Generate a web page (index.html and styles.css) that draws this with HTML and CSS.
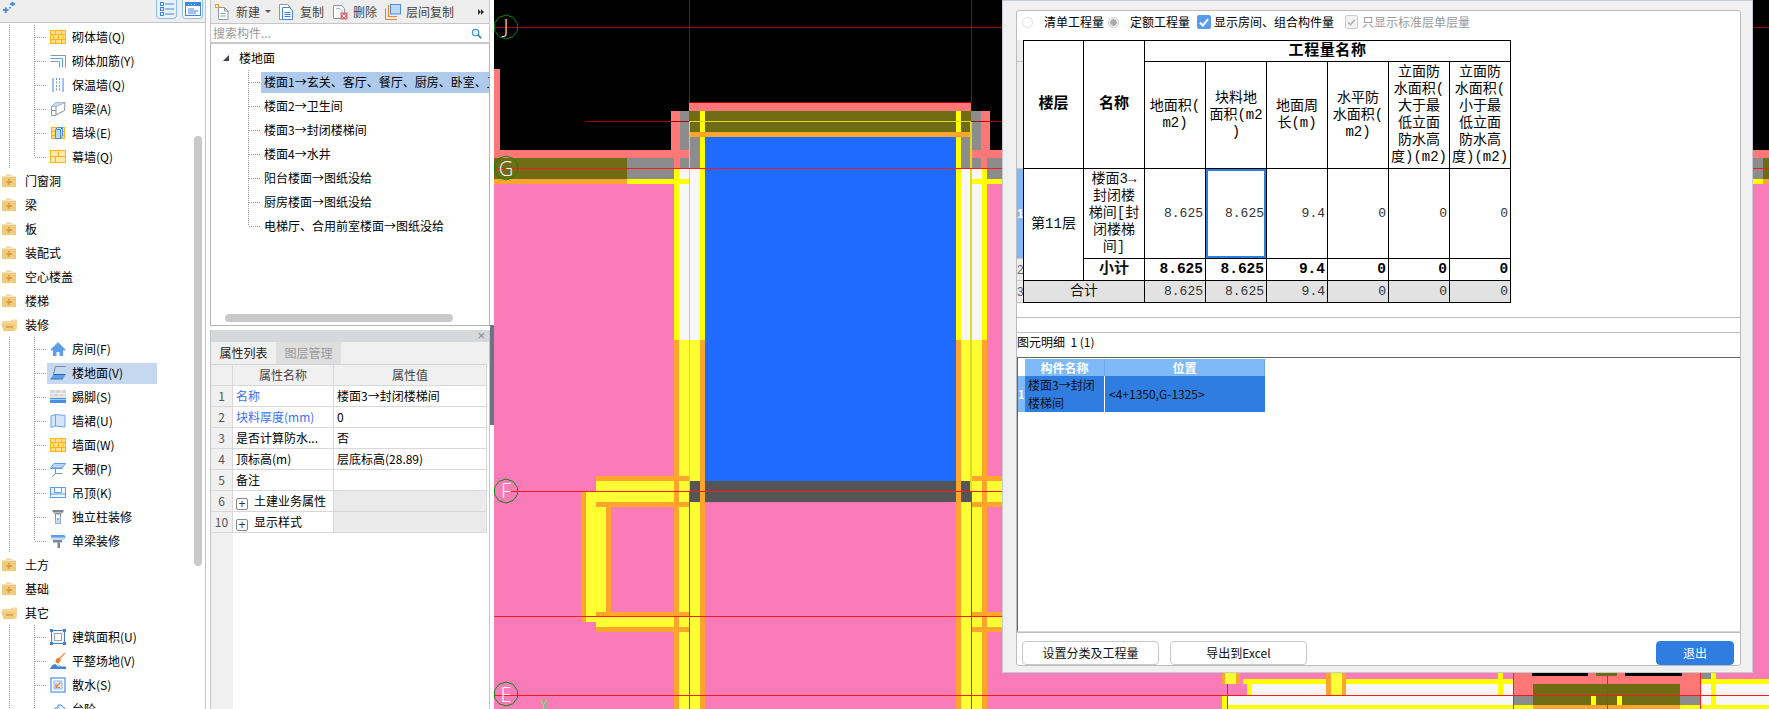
FILE: index.html
```html
<!DOCTYPE html>
<html lang="zh">
<head>
<meta charset="utf-8">
<title>工程量</title>
<link rel="stylesheet" href="styles.css">
</head>
<body>
<svg class="defs" xmlns="http://www.w3.org/2000/svg">
  <symbol id="i-brick" viewBox="0 0 16 16"><rect x=".5" y="1.5" width="15" height="13" fill="#ffe08a" stroke="#fdb515"/><path d="M1 5.5h14M1 10.500h14M5.500 2v3.500M11.500 2v3.500M3.500 5.500v5M8.500 5.500v5M13 5.500v5M5.500 10.500v4M11.500 10.500v4" stroke="#fdb515" fill="none"/></symbol>
  <symbol id="i-rebar" viewBox="0 0 16 16"><path d="M.5 2.500h15v12" fill="none" stroke="#8a97a8"/><path d="M.5 5.500h12v9" fill="none" stroke="#5b9be0"/><path d="M.5 8.500h9v6" fill="none" stroke="#8a97a8"/></symbol>
  <symbol id="i-insul" viewBox="0 0 16 16"><path d="M3 1v14M13 1v14" stroke="#3f86dc" fill="none"/><path d="M6.500 1v14M9.500 1v14" stroke="#7d8ea3" stroke-dasharray="2 1.500" fill="none"/><path d="M3 5h10M3 10h10" stroke="#9cc3ee" stroke-dasharray="1 2" fill="none"/></symbol>
  <symbol id="i-beam" viewBox="0 0 16 16"><path d="M1.500 5.500 6 1.500h9l-.5 8-9.500 5h-3.500z" fill="#fff" stroke="#8492a6"/><path d="M1.500 5.500H6l9-4M6 5.500v9" fill="none" stroke="#8492a6"/><path d="M6 1.500l9 0-9 4H1.500z" fill="#c6dcf5"/><path d="M1.500 9.500H6" stroke="#8492a6"/></symbol>
  <symbol id="i-pier" viewBox="0 0 16 16"><rect x="1.500" y="2.500" width="13" height="11" fill="#ffe08a" stroke="#fdb515"/><path d="M2 6.500h12M2 10.500h12" stroke="#fdb515"/><path d="M5.500 4.500l2-2h5v9l-2 2h-5z" fill="#bcd8f6" stroke="#4a90e2"/><path d="M5.500 4.500h5v9M10.500 4.500l2-2" fill="none" stroke="#4a90e2"/></symbol>
  <symbol id="i-curtain" viewBox="0 0 16 16"><rect x=".5" y="1.500" width="15" height="12" fill="#ffe9ac" stroke="#fdb515"/><path d="M1 7.500h14M8.500 2v5.500M5.500 7.500v6" stroke="#fdb515" fill="none"/></symbol>
  <symbol id="i-house" viewBox="0 0 16 16"><path d="M8 1 .5 8.500 2 10l1-1v6h3.500v-4h3v4H13V9l1 1 1.500-1.500z" fill="#5c9fe8"/><path d="M4 5 8 1.500" stroke="#b8d4f3" fill="none"/></symbol>
  <symbol id="i-floor" viewBox="0 0 16 16"><path d="M5.500 1.500h10M5.500 1.500 3.500 9" stroke="#7b8696" fill="none"/><path d="M3.500 9.500H15.500L13 14H.5z" fill="#5c9fe8"/><path d="M3.500 9.500H15.500" stroke="#33659d"/><path d="M.5 14H13" stroke="#3b75b4"/></symbol>
  <symbol id="i-skirt" viewBox="0 0 16 16"><rect y="1" width="16" height="8" fill="#d4d6d9"/><path d="M0 4.500h16M0 8h16M5 1v3.500M11 1v3.500M3 4.500V8M9 4.500V8M14 4.500V8" stroke="#f2f2f2"/><rect y="9" width="16" height="5" fill="#4a8fe0"/><path d="M0 10.500h16" stroke="#a9cdf2"/></symbol>
  <symbol id="i-dado" viewBox="0 0 16 16"><path d="M1 3 5.500 1.500 15 2.500V14L5.500 13 1 14.500z" fill="#d3e5fa" stroke="#6ea6e6"/><path d="M5.500 1.500V13" stroke="#6ea6e6"/></symbol>
  <symbol id="i-ceil" viewBox="0 0 16 16"><path d="M4 2.500h11.500L12 7H.5z" fill="#bcd8f6" stroke="#5c9fe8"/><path d="M.5 7h12v1H.5z" fill="#5c9fe8"/><path d="M5.500 8v4.500h7M5.500 12.500 2 15.500" stroke="#8492a6" fill="none"/></symbol>
  <symbol id="i-drop" viewBox="0 0 16 16"><rect x=".5" y="2.500" width="15" height="10" fill="#f0f6fd" stroke="#5c9fe8"/><path d="M4.500 3v4.500h7V3" fill="#fff" stroke="#5c9fe8"/><path d="M1 9h14" stroke="#5c9fe8"/></symbol>
  <symbol id="i-col" viewBox="0 0 16 16"><path d="M2.500 1h11v2.500h-11z" fill="#7d8792"/><path d="M4 3.500h8V5H4z" fill="#a6adb5"/><rect x="5.500" y="5" width="5" height="9.500" fill="#fff" stroke="#7d8ea3"/><path d="M5.500 10.500 10.500 7.500v7h-5z" fill="#c6dcf5"/><path d="M8 9v2" stroke="#4a90e2"/></symbol>
  <symbol id="i-paint" viewBox="0 0 16 16"><path d="M1 1.500h13L15.500 4l-1.500 2H1z" fill="#5c9fe8"/><path d="M1 1.500h13" stroke="#fff"/><path d="M1 4.500h13V7H1z" fill="#c6dcf5"/><path d="M3 7h9v2.500H3z" fill="#7d8792"/><path d="M7.500 9.500h2.500v5.500H7.500z" fill="#7d8792"/></symbol>
  <symbol id="i-area" viewBox="0 0 16 16"><rect x="1.500" y="1.500" width="13" height="13" fill="#eef3fa" stroke="#4a7fc0"/><rect x="4.500" y="4.500" width="7" height="7" fill="#fff" stroke="#9aa4b0"/><path d="M0 0h3v3H0zM13 0h3v3h-3zM0 13h3v3H0zM13 13h3v3h-3z" fill="#4a7fc0"/></symbol>
  <symbol id="i-shovel" viewBox="0 0 16 16"><path d="M15 0 9 6" stroke="#f08a3c" stroke-width="1.200" fill="none"/><path d="M9 4.500 11 7 8.500 10.500 5.500 9.500 6 6z" fill="#f0812c"/><path d="M6.500 11 10 13.500H12.500z" fill="#9aa0a8"/><path d="M0 15.500 2.500 12 5.500 11 8 13.500 16 13.500V16H0z" fill="#3f82d6"/></symbol>
  <symbol id="i-apron" viewBox="0 0 16 16"><rect x="1" y="1" width="14" height="14" fill="#fff" stroke="#4a8fe0" stroke-width="1.200"/><rect x="4" y="4" width="8" height="8" fill="#dce9f8" stroke="#8ab6e8"/><path d="M10.500 5.500 6.500 9.500M6 6.500v4h4" stroke="#f0812c" fill="none" stroke-width="1.200"/></symbol>
  <symbol id="i-step" viewBox="0 0 16 16"><path d="M1 14v-4h4V7h3V4h3L15 7.500v7" fill="#e8f1fb" stroke="#4a8fe0"/></symbol>
  <symbol id="i-fplus" viewBox="0 0 16 16"><path d="M5 1.500h5l1 1.500H5z" fill="#eed39c"/><rect x="1" y="3.500" width="14" height="10.500" fill="#f0cb80"/><path d="M8 6v6M5 9h6" stroke="#d39b2f" stroke-width="1.400"/></symbol>
  <symbol id="i-fminus" viewBox="0 0 16 16"><path d="M1 4h8l2-1.500h5V12l-2 2H3z" fill="#f4d796"/><path d="M0 6.500h13l1.500 0-1 7.500H2.500z" fill="#f0cb80"/><path d="M5 10h7" stroke="#d39b2f" stroke-width="1.400"/></symbol>
  <symbol id="i-new" viewBox="0 0 16 16"><path d="M3.500 3.500h6l3.500 3.500v8.500H3.500z" fill="#fff" stroke="#8a98a8"/><path d="M9.500 3.500V7H13" fill="none" stroke="#8a98a8"/><path d="M5.500 9.500h5M5.500 12h5" stroke="#8a98a8"/><path d="M0 0h4v4H0z" fill="#f59a2e"/><path d="M1 1h2v2H1z" fill="#fff"/></symbol>
  <symbol id="i-copy" viewBox="0 0 16 16"><path d="M1 .5h8l3 3v12H1z" fill="#fff" stroke="#8a98a8" transform="translate(-.5 0)"/><path d="M3.500 3.500h7l3 3v9h-10z" fill="#fff" stroke="#3f86dc"/><path d="M5.500 8.500h6M5.500 10.500h6M5.500 12.500h6" stroke="#3f86dc"/></symbol>
  <symbol id="i-del" viewBox="0 0 16 16"><path d="M1.500 1.500h8l3 3v10h-11z" fill="#fff" stroke="#8a98a8"/><path d="M4 4.500h4l2 2v3" fill="none" stroke="#b8c0ca"/><rect x="8.500" y="8.500" width="7" height="7" fill="#e06a6a"/><path d="M10 10l4 4M14 10l-4 4" stroke="#fff"/></symbol>
  <symbol id="i-floors" viewBox="0 0 16 16"><path d="M3.500 1v11.500H12M.5 4.500v11H12" fill="none" stroke="#f0812c" stroke-width="1.100"/><rect x="5.500" y=".5" width="10" height="9.500" fill="#bcd8f6" stroke="#4a90e2"/></symbol>
  <symbol id="i-list" viewBox="0 0 16 16"><rect x="1.500" y="1.500" width="3" height="3" fill="none" stroke="#3f86dc"/><rect x="1.500" y="6.500" width="3" height="3" fill="none" stroke="#3f86dc"/><rect x="1.500" y="11.500" width="3" height="3" fill="none" stroke="#3f86dc"/><path d="M6 3h9M6 8h9M6 13h9" stroke="#3f86dc"/></symbol>
  <symbol id="i-panel" viewBox="0 0 16 16"><rect x=".5" y="1.500" width="15" height="13" fill="#fff" stroke="#3f86dc"/><path d="M1 2h14v3H1z" fill="#3f86dc"/><path d="M3 3.500h1M6 3.500h1M9 3.500h1" stroke="#fff"/><path d="M3 8h6M3 10h10M3 12h8" stroke="#3f86dc"/></symbol>
  <symbol id="i-wand" viewBox="0 0 12 12"><path d="M7 2h5M9.500 0v4" stroke="#4a8fd8" stroke-width="2"/><path d="M0 8h5.500M2.750 5.500v5.500" stroke="#4a8fd8" stroke-width="2"/><path d="M6 5h2v1.500H6z" fill="#4a8fd8"/></symbol>
  <symbol id="i-search" viewBox="0 0 12 12"><circle cx="5" cy="5" r="3.500" fill="#e9f3fb" stroke="#4a9ad4" stroke-width="1.400"/><path d="M7.500 7.500 11 11" stroke="#3b7fae" stroke-width="1.800"/></symbol>
</svg>

<div class="app">
  <aside class="left">
    <div class="ltools">
      <svg class="wand"><use href="#i-wand"/></svg>
      <span class="grow"></span>
      <button class="tbtn on"><svg class="ic"><use href="#i-list"/></svg></button>
      <button class="tbtn"><svg class="ic"><use href="#i-panel"/></svg></button>
    </div>
    <div class="ltree">
      <div class="outer">
        <div class="kid"><i class="stub"></i><span class="lab"><svg class="ic"><use href="#i-brick"/></svg>砌体墙(Q)</span></div>
        <div class="kid"><i class="stub"></i><span class="lab"><svg class="ic"><use href="#i-rebar"/></svg>砌体加筋(Y)</span></div>
        <div class="kid"><i class="stub"></i><span class="lab"><svg class="ic"><use href="#i-insul"/></svg>保温墙(Q)</span></div>
        <div class="kid"><i class="stub"></i><span class="lab"><svg class="ic"><use href="#i-beam"/></svg>暗梁(A)</span></div>
        <div class="kid"><i class="stub"></i><span class="lab"><svg class="ic"><use href="#i-pier"/></svg>墙垛(E)</span></div>
        <div class="kid"><i class="stub"></i><span class="lab"><svg class="ic"><use href="#i-curtain"/></svg>幕墙(Q)</span></div>
      </div>
      <div class="fold"><svg class="ic"><use href="#i-fplus"/></svg>门窗洞</div>
      <div class="fold"><svg class="ic"><use href="#i-fplus"/></svg>梁</div>
      <div class="fold"><svg class="ic"><use href="#i-fplus"/></svg>板</div>
      <div class="fold"><svg class="ic"><use href="#i-fplus"/></svg>装配式</div>
      <div class="fold"><svg class="ic"><use href="#i-fplus"/></svg>空心楼盖</div>
      <div class="fold"><svg class="ic"><use href="#i-fplus"/></svg>楼梯</div>
      <div class="fold"><svg class="ic"><use href="#i-fminus"/></svg>装修</div>
      <div class="outer">
        <div class="kid"><i class="stub"></i><span class="lab"><svg class="ic"><use href="#i-house"/></svg>房间(F)</span></div>
        <div class="kid"><i class="stub"></i><span class="lab sel"><svg class="ic"><use href="#i-floor"/></svg>楼地面(V)</span></div>
        <div class="kid"><i class="stub"></i><span class="lab"><svg class="ic"><use href="#i-skirt"/></svg>踢脚(S)</span></div>
        <div class="kid"><i class="stub"></i><span class="lab"><svg class="ic"><use href="#i-dado"/></svg>墙裙(U)</span></div>
        <div class="kid"><i class="stub"></i><span class="lab"><svg class="ic"><use href="#i-brick"/></svg>墙面(W)</span></div>
        <div class="kid"><i class="stub"></i><span class="lab"><svg class="ic"><use href="#i-ceil"/></svg>天棚(P)</span></div>
        <div class="kid"><i class="stub"></i><span class="lab"><svg class="ic"><use href="#i-drop"/></svg>吊顶(K)</span></div>
        <div class="kid"><i class="stub"></i><span class="lab"><svg class="ic"><use href="#i-col"/></svg>独立柱装修</span></div>
        <div class="kid"><i class="stub"></i><span class="lab"><svg class="ic"><use href="#i-paint"/></svg>单梁装修</span></div>
      </div>
      <div class="fold"><svg class="ic"><use href="#i-fplus"/></svg>土方</div>
      <div class="fold"><svg class="ic"><use href="#i-fplus"/></svg>基础</div>
      <div class="fold"><svg class="ic"><use href="#i-fminus"/></svg>其它</div>
      <div class="outer">
        <div class="kid"><i class="stub"></i><span class="lab"><svg class="ic"><use href="#i-area"/></svg>建筑面积(U)</span></div>
        <div class="kid"><i class="stub"></i><span class="lab"><svg class="ic"><use href="#i-shovel"/></svg>平整场地(V)</span></div>
        <div class="kid"><i class="stub"></i><span class="lab"><svg class="ic"><use href="#i-apron"/></svg>散水(S)</span></div>
        <div class="kid"><i class="stub"></i><span class="lab"><svg class="ic"><use href="#i-step"/></svg>台阶</span></div>
      </div>
    </div>
    <div class="vthumb"></div>
  </aside>

  <section class="mid">
    <div class="mtools">
      <span class="tool"><svg class="ic"><use href="#i-new"/></svg>新建<i class="caret"></i></span>
      <span class="tool"><svg class="ic"><use href="#i-copy"/></svg>复制</span>
      <span class="tool"><svg class="ic"><use href="#i-del"/></svg>删除</span>
      <span class="tool"><svg class="ic"><use href="#i-floors"/></svg>层间复制</span>
      <span class="grow"></span>
      <span class="more"><i></i><i></i></span>
    </div>
    <div class="search"><span class="grow">搜索构件...</span><svg class="mag"><use href="#i-search"/></svg></div>
    <div class="mtree">
      <div class="root"><i class="tri"></i>楼地面</div>
      <div class="kids">
        <div class="kid"><i class="stub"></i><span class="lab on">楼面1→玄关、客厅、餐厅、厨房、卧室、卫</span></div>
        <div class="kid"><i class="stub"></i><span class="lab">楼面2→卫生间</span></div>
        <div class="kid"><i class="stub"></i><span class="lab">楼面3→封闭楼梯间</span></div>
        <div class="kid"><i class="stub"></i><span class="lab">楼面4→水井</span></div>
        <div class="kid"><i class="stub"></i><span class="lab">阳台楼面→图纸没给</span></div>
        <div class="kid"><i class="stub"></i><span class="lab">厨房楼面→图纸没给</span></div>
        <div class="kid"><i class="stub"></i><span class="lab">电梯厅、合用前室楼面→图纸没给</span></div>
      </div>
      <div class="hthumb"></div>
    </div>
    <div class="props">
      <div class="phead"><span class="close">×</span></div>
      <div class="ptabs"><span class="ptab active">属性列表</span><span class="ptab">图层管理</span></div>
      <div class="pbody">
        <table class="ptable">
          <colgroup><col class="c-n"><col class="c-k"><col class="c-v"></colgroup>
          <tr class="hd"><th></th><th>属性名称</th><th>属性值</th></tr>
          <tr><td class="n">1</td><td class="blue">名称</td><td>楼面3→封闭楼梯间</td></tr>
          <tr><td class="n">2</td><td class="blue">块料厚度(mm)</td><td>0</td></tr>
          <tr><td class="n">3</td><td>是否计算防水...</td><td>否</td></tr>
          <tr><td class="n">4</td><td>顶标高(m)</td><td>层底标高(28.89)</td></tr>
          <tr><td class="n">5</td><td>备注</td><td></td></tr>
          <tr class="grp"><td class="n">6</td><td><i class="plus">+</i>土建业务属性</td><td></td></tr>
          <tr class="grp"><td class="n">10</td><td><i class="plus">+</i>显示样式</td><td></td></tr>
        </table>
      </div>
    </div>
  </section>

  <div class="sash"><div class="grip"></div></div>

  <main class="canvas">
    <svg class="cad" viewBox="494 0 1275 709" xmlns="http://www.w3.org/2000/svg">
      <defs>
        <polygon id="hub" points="0,-12 7,-9.700 11.400,-3.700 11.400,3.700 7,9.700 0,12 -7,9.700 -11.400,3.700 -11.400,-3.700 -7,-9.700"/>
      </defs>
      <g class="rects">
        <rect class="pk" x="494" y="184" width="1275" height="525"/>
        <rect class="bk" x="494" y="0" width="1275" height="184"/>
        <!-- left wing -->
        <rect class="sa" x="494" y="69" width="6" height="81"/>
        <rect class="sa" x="494" y="150" width="177" height="8"/>
        <rect class="sa" x="671" y="111" width="9" height="57"/>
        <rect class="gy" x="680" y="111" width="9" height="39"/>
        <rect class="sa" x="680" y="150" width="9" height="8"/>
        <rect class="gy" x="627" y="158" width="47" height="21"/>
        <rect class="ol" x="494" y="158" width="133" height="21"/>
        <rect class="or" x="494" y="179" width="133" height="5"/>
        <rect class="gy" x="680" y="158" width="9" height="10"/>
        <rect class="wh" x="679" y="168" width="12" height="172"/>
        <rect class="ye" x="674" y="168" width="5" height="172"/>
        <rect class="ye" x="627" y="179" width="62" height="5"/>
        <!-- top strip -->
        <rect class="sa" x="689" y="103" width="282" height="8"/>
        <rect class="ol" x="689" y="111" width="282" height="21"/>
        <rect class="or" x="689" y="132" width="282" height="5"/>
        <rect class="ye" x="700" y="111" width="5" height="21"/>
        <rect class="ye" x="956" y="111" width="5" height="21"/>
        <rect class="gy" x="689" y="137" width="11" height="31"/>
        <rect class="gy" x="961" y="137" width="10" height="31"/>
        <rect class="wh" x="691" y="168" width="9" height="172"/>
        <rect class="wh" x="961" y="168" width="10" height="172"/>
        <rect class="ye" x="700" y="137" width="5" height="203"/>
        <rect class="ye" x="956" y="137" width="5" height="203"/>
        <rect class="bl" x="705" y="137" width="251" height="344"/>
        <!-- right wing -->
        <rect class="gy" x="971" y="111" width="10" height="39"/>
        <rect class="sa" x="981" y="111" width="9" height="57"/>
        <rect class="sa" x="971" y="150" width="31" height="8"/>
        <rect class="gy" x="971" y="158" width="10" height="10"/>
        <rect class="gy" x="987" y="158" width="15" height="21"/>
        <rect class="wh" x="971" y="168" width="11" height="172"/>
        <rect class="ye" x="982" y="168" width="5" height="172"/>
        <rect class="ye" x="971" y="179" width="31" height="5"/>
        <!-- lower columns -->
        <rect class="or" x="674" y="340" width="5" height="369"/>
        <rect class="ly" x="679" y="340" width="21" height="369"/>
        <rect class="or" x="700" y="340" width="5" height="369"/>
        <rect class="or" x="956" y="340" width="5" height="369"/>
        <rect class="ly" x="961" y="340" width="21" height="369"/>
        <rect class="or" x="982" y="340" width="5" height="369"/>
        <!-- left frame -->
        <rect class="ly" x="586" y="491" width="20" height="131"/>
        <rect class="or" x="581" y="491" width="5" height="131"/>
        <rect class="or" x="606" y="491" width="5" height="131"/>
        <!-- cross bars -->
        <rect class="or" x="596" y="476" width="93" height="5"/>
        <rect class="ly" x="596" y="481" width="93" height="21"/>
        <rect class="or" x="596" y="502" width="93" height="5"/>
        <rect class="or" x="596" y="612" width="93" height="5"/>
        <rect class="ly" x="596" y="617" width="93" height="10"/>
        <rect class="or" x="596" y="627" width="93" height="5"/>
        <rect class="or" x="674" y="476" width="5" height="31"/>
        <rect class="or" x="674" y="612" width="5" height="20"/>
        <rect class="or" x="971" y="476" width="31" height="5"/>
        <rect class="ly" x="971" y="481" width="31" height="21"/>
        <rect class="or" x="971" y="502" width="31" height="5"/>
        <rect class="or" x="971" y="612" width="31" height="5"/>
        <rect class="ly" x="971" y="617" width="31" height="10"/>
        <rect class="or" x="971" y="627" width="31" height="5"/>
        <rect class="or" x="982" y="476" width="5" height="31"/>
        <rect class="or" x="982" y="612" width="5" height="20"/>
        <!-- dark band -->
        <rect class="dk" x="689" y="481" width="11" height="21"/>
        <rect class="dk" x="705" y="481" width="251" height="21"/>
        <rect class="dk" x="961" y="481" width="10" height="21"/>
        <!-- right of the window -->
        <rect class="sa" x="1753" y="150" width="16" height="8"/>
        <rect class="gy" x="1753" y="158" width="10" height="21"/>
        <rect class="ol" x="1763" y="158" width="6" height="21"/>
        <rect class="ye" x="1753" y="179" width="10" height="5"/>
        <rect class="or" x="1763" y="179" width="6" height="5"/>
        <!-- below the window -->
        <rect class="or" x="1222" y="673" width="3" height="11"/>
        <rect class="ly" x="1225" y="673" width="11" height="11"/>
        <rect class="or" x="1236" y="673" width="4" height="11"/>
        <rect class="ye" x="1243" y="679" width="270" height="5"/>
        <rect class="wh" x="1252" y="684" width="246" height="11"/>
        <rect class="ye" x="1247" y="684" width="5" height="11"/>
        <rect class="ye" x="1498" y="673" width="5" height="22"/>
        <rect class="wh" x="1503" y="684" width="10" height="11"/>
        <rect class="ye" x="1222" y="695" width="5" height="14"/>
        <rect class="wh" x="1227" y="695" width="286" height="10"/>
        <rect class="ye" x="1227" y="705" width="286" height="4"/>
        <rect class="or" x="1326" y="673" width="5" height="22"/>
        <rect class="ly" x="1331" y="673" width="11" height="22"/>
        <rect class="or" x="1342" y="673" width="4" height="22"/>
        <rect class="sa" x="1513" y="673" width="187" height="22"/>
        <rect class="bk" x="1532" y="673" width="56" height="3"/>
        <rect class="ol" x="1596" y="673" width="21" height="3"/>
        <rect class="bk" x="1625" y="673" width="57" height="3"/>
        <rect class="ol" x="1533" y="684" width="147" height="21"/>
        <rect class="gy" x="1513" y="695" width="20" height="10"/>
        <rect class="gy" x="1680" y="695" width="20" height="10"/>
        <rect class="ye" x="1591" y="695" width="5" height="10"/>
        <rect class="ye" x="1617" y="695" width="5" height="10"/>
        <rect class="or" x="1533" y="705" width="147" height="4"/>
        <rect class="ye" x="1513" y="705" width="20" height="4"/>
        <rect class="ye" x="1680" y="705" width="20" height="4"/>
        <rect class="gy" x="1701" y="673" width="10" height="7"/>
        <rect class="ye" x="1711" y="673" width="5" height="22"/>
        <rect class="ye" x="1700" y="679" width="69" height="5"/>
        <rect class="wh" x="1700" y="684" width="11" height="11"/>
        <rect class="wh" x="1716" y="684" width="53" height="11"/>
        <rect class="wh" x="1700" y="695" width="69" height="10"/>
        <rect class="ye" x="1711" y="695" width="5" height="10"/>
        <rect class="ye" x="1700" y="705" width="69" height="4"/>
      </g>
      <rect class="wall" x="689.500" y="121.500" width="281.500" height="370"/>
      <g class="dred">
        <path d="M494 27.500H1769M689.500 0V103M971.500 0V103M689 102.500H971M586 121.500H689M971 121.500H1002"/>
      </g>
      <g class="bred">
        <path d="M494 168.500H1769M509 491.500H1002M494 616.500H1002M494 695H1769M689.500 491V709M971.500 491V709M1227.500 684V709M1513.500 673V709M1607.500 673V709M1700.500 673V709"/>
      </g>
      <g class="hubs">
        <use href="#hub" x="506" y="27"/>
        <use href="#hub" x="506" y="168"/>
        <use href="#hub" x="506" y="491"/>
        <use href="#hub" x="506" y="694"/>
      </g>
      <g class="axis">
        <text x="506" y="34">J</text>
        <text x="506" y="176">G</text>
        <text x="506" y="498">F</text>
        <text x="506" y="702">E</text>
      </g>
      <text class="ytag" x="544" y="709">Y</text>
    </svg>

    <div class="dialog">
      <div class="sheet">
        <div class="pane-a">
          <div class="opts">
            <span class="radio"></span><span class="opt w-a">清单工程量</span>
            <span class="radio dot"></span><span class="opt w-b">定额工程量</span>
            <span class="check"><svg viewBox="0 0 12 12"><path d="M2.500 6.500 5 9l4.500-5.500" fill="none" stroke="#fff" stroke-width="1.800"/></svg></span><span class="opt w-c">显示房间、组合构件量</span>
            <span class="check off"><svg viewBox="0 0 12 12"><path d="M2.500 6.500 5 9l4.500-5.500" fill="none" stroke="#aaa" stroke-width="1.600"/></svg></span><span class="opt dim">只显示标准层单层量</span>
          </div>
          <table class="qty">
            <colgroup><col class="g"><col class="q"><col class="q"><col class="q"><col class="q"><col class="q"><col class="q"><col class="q"><col class="q"></colgroup>
            <tr class="r-a"><td class="rn"></td><th class="first top b" rowspan="2">楼层</th><th class="top b" rowspan="2">名称</th><th class="top b big" colspan="6">工程量名称</th></tr>
            <tr class="r-b"><td class="rn"></td><th>地面积(<br>m2)</th><th>块料地<br>面积(m2<br>)</th><th>地面周<br>长(m)</th><th>水平防<br>水面积(<br>m2)</th><th>立面防<br>水面积(<br>大于最<br>低立面<br>防水高<br>度)(m2)</th><th>立面防<br>水面积(<br>小于最<br>低立面<br>防水高<br>度)(m2)</th></tr>
            <tr class="r-c"><td class="rn hot">1</td><td class="first tx" rowspan="2">第11层</td><td class="tx">楼面3→<br>封闭楼<br>梯间[封<br>闭楼梯<br>间]</td><td class="num">8.625</td><td class="num picked">8.625</td><td class="num">9.4</td><td class="num">0</td><td class="num">0</td><td class="num">0</td></tr>
            <tr class="r-d"><td class="rn">2</td><td class="tx b">小计</td><td class="num b">8.625</td><td class="num b">8.625</td><td class="num b">9.4</td><td class="num b">0</td><td class="num b">0</td><td class="num b">0</td></tr>
            <tr class="r-d tot"><td class="rn">3</td><td class="first tx" colspan="2">合计</td><td class="num">8.625</td><td class="num">8.625</td><td class="num">9.4</td><td class="num">0</td><td class="num">0</td><td class="num">0</td></tr>
          </table>
        </div>
        <div class="pane-b">
          <div class="pb-title">图元明细&nbsp;&nbsp;1 (1)</div>
          <div class="pb-grid">
            <table class="det">
              <colgroup><col class="d0"><col class="d1"><col class="d2"></colgroup>
              <tr class="dh"><th class="blank"></th><th>构件名称</th><th>位置</th></tr>
              <tr class="dr"><td class="dn">1</td><td>楼面3→封闭<br>楼梯间</td><td>&lt;4+1350,G-1325&gt;</td></tr>
            </table>
          </div>
        </div>
        <div class="foot">
          <button class="btn w1">设置分类及工程量</button>
          <button class="btn w1">导出到Excel</button>
          <span class="grow"></span>
          <button class="btn exit">退出</button>
        </div>
      </div>
    </div>
  </main>
</div>
</body>
</html>
```

FILE: styles.css
```css
* { box-sizing: border-box; }
html, body { margin: 0; height: 100%; }
body {
  background: #fff;
  color: #000;
  font: 12px/16px "Noto Sans CJK SC", "Liberation Sans", sans-serif;
  overflow: hidden;
}
.defs { display: none; }
.grow { flex: 1; }
.ic { width: 16px; height: 16px; flex: none; }
.app { display: flex; width: 1769px; height: 709px; overflow: hidden; }

/* left tree */
.left { position: relative; width: 206px; height: 709px; border-right: 1px solid #c4c4c4; flex: none; overflow: hidden; }
.ltools { display: flex; align-items: flex-start; height: 23px; padding-right: 2px; gap: 5px; background: #eee; border-bottom: 1px solid #c2c4c8; }
.wand { width: 12px; height: 12px; margin: 2px 0 0 3px; }
.tbtn { width: 21px; height: 19px; padding: 0; display: flex; align-items: center; justify-content: center; background: #f4f8fd; border: 1px solid #8fc0f2; border-top: 0; border-radius: 0 0 4px 4px; }
.tbtn.on { background: #e8f2fc; }
.ltree { padding-top: 2px; }
.fold { display: flex; align-items: center; height: 24px; padding-left: 1px; gap: 8px; }
.outer { margin-left: 9px; padding-left: 25px; background: repeating-linear-gradient(#999 0 1px, transparent 1px 2px) 0 0 / 1px 100% no-repeat; }
.kid { display: flex; align-items: center; height: 24px; background: repeating-linear-gradient(#999 0 1px, transparent 1px 2px) 0 0 / 1px 100% no-repeat; }
.kid:last-child { background-size: 1px 12px; }
.stub { flex: none; width: 12px; height: 1px; margin-left: 1px; background: repeating-linear-gradient(90deg, #999 0 1px, transparent 1px 2px); }
.lab { display: flex; align-items: center; gap: 6px; height: 21px; padding-left: 3px; white-space: nowrap; }
.outer .lab { width: 110px; }
.lab.sel { background: #c6d7f0; }
.vthumb { position: absolute; left: 194px; top: 136px; width: 8px; height: 430px; border-radius: 4px; background: #c9c9c9; }

/* middle column */
.mid { display: flex; flex-direction: column; flex: none; width: 280px; height: 709px; margin-left: 4px; }
.mtools { display: flex; align-items: center; height: 24px; padding-left: 4px; background: #eee; border: 1px solid #c6c6c6; border-width: 0 1px 1px; color: #444; }
.tool { display: flex; align-items: center; gap: 5px; margin-right: 8px; }
.caret { width: 0; height: 0; margin-left: 0; border: 3px solid transparent; border-top: 3px solid #555; border-bottom: 0; }
.more { display: flex; margin-right: 5px; }
.more i { width: 0; height: 0; border: 3px solid transparent; border-left: 3px solid #333; border-right: 0; }
.search { display: flex; align-items: center; height: 19px; padding: 0 7px 0 2px; color: #999; border: 1px solid #c6c6c6; border-width: 0 1px 1px; }
.mag { width: 11px; height: 11px; }
.mtree { position: relative; height: 283px; padding-top: 2px; border: 1px solid #b4b4b4; border-top-color: #c8c8c8; overflow: hidden; }
.root { display: flex; align-items: center; height: 24px; padding-left: 12px; }
.tri { width: 0; height: 0; margin-right: 10px; border-style: solid; border-width: 0 0 6px 6px; border-color: transparent transparent #444 transparent; }
.kids { margin-left: 37px; }
.mtree .lab { flex: 1; min-width: 0; overflow: hidden; }
.mtree .lab.on { background: #aecbee; }
.hthumb { position: absolute; left: 14px; top: 270px; width: 228px; height: 8px; border-radius: 4px; background: #c9c9c9; }
.props { display: flex; flex-direction: column; flex: 1; margin-top: 4px; border: 1px solid #c4c4c4; border-width: 0 1px; }
.phead { height: 12px; background: #d6d8dc; display: flex; justify-content: flex-end; align-items: center; padding-right: 4px; }
.close { font: 13px/12px "Liberation Sans", sans-serif; color: #888; }
.ptabs { display: flex; height: 22px; background: #f0f0f0; font-size: 12px; }
.ptab { width: 65px; display: flex; align-items: center; justify-content: center; color: #999; background: #dedede; border-top: 0; }
.ptab.active { color: #222; background: #f0f0f0; }
.pbody { flex: 1; background: linear-gradient(90deg, #f0f0f0 0 22px, #fff 22px); }
.ptable { border-collapse: separate; border-spacing: 0; table-layout: fixed; width: 276px; border-top: 1px solid #d4d4d4; }
.ptable tr { height: 21px; }
.c-n { width: 22px; } .c-k { width: 101px; } .c-v { width: 153px; }
.ptable th, .ptable td { padding: 0 3px; border-right: 1px solid #d8d8d8; border-bottom: 1px solid #d8d8d8; background: #fff; text-align: left; font-weight: 400; white-space: nowrap; overflow: hidden; }
.ptable .hd th { background: #f0f0f0; text-align: center; color: #444; }
.ptable .n { background: #f0f0f0; text-align: center; color: #555; padding: 0; }
.ptable .blue { color: #3b6ff0; }
.ptable .grp td:last-child { background: #eaeaea; }
.plus { display: inline-flex; width: 12px; height: 12px; margin: 0 6px 0 0; align-items: center; justify-content: center; vertical-align: -2px; border: 1px solid #888; border-radius: 2px; font: 12px/10px "Liberation Sans", sans-serif; color: #333; }

.sash { width: 4px; flex: none; padding-top: 325px; }
.grip { height: 100px; background: #6b7580; }

/* canvas */
.canvas { position: relative; flex: 1; height: 709px; overflow: hidden; }
.cad { display: block; width: 1275px; height: 709px; }
.rects { shape-rendering: crispEdges; }
.pk { fill: #f97cb8; } .bk { fill: #000; } .sa { fill: #ff7777; } .gy { fill: #8c8c8c; }
.ol { fill: #6f6c14; } .or { fill: #ffa52b; } .ye { fill: #ffff00; } .ly { fill: #ffff33; }
.wh { fill: #f7f7f7; } .bl { fill: #1f6bff; } .dk { fill: #555; }
.wall { fill: none; stroke: #dcdc20; stroke-width: 1.5; shape-rendering: crispEdges; }
.dred path { fill: none; stroke: #a80000; stroke-width: 1; shape-rendering: crispEdges; }
.bred path { fill: none; stroke: #ff1a1a; stroke-width: 1; shape-rendering: crispEdges; }
.hubs use { fill: none; stroke: #0a8a0a; stroke-width: 1; }
.axis text { fill: #fff; font: 300 20px "Open Sans", sans-serif; text-anchor: middle; }
.ytag { fill: #3dff3d; font: 12px "Liberation Sans", sans-serif; text-anchor: middle; }

/* window */
.dialog { position: absolute; left: 508px; top: 0; width: 751px; height: 673px; padding: 9px 11px 6px 13px; background: #f0f0f0; border: 1px solid #c6cad2; }
.sheet { display: flex; flex-direction: column; height: 656px; background: #fff; border: 1px solid #bcbcbc; border-radius: 3px; }
.pane-a { height: 307px; border-bottom: 1px solid #bcbcbc; }
.opts { display: flex; align-items: center; height: 29px; padding: 0 0 7px 5px; }
.radio { width: 11px; height: 11px; margin-right: 11px; border: 1px solid #ddd; border-radius: 50%; flex: none; }
.radio.dot { background: radial-gradient(circle, #aaa 0 3px, #f4f4f4 3.500px); border-color: #ccc; }
.opt { white-space: nowrap; }
.w-a { width: 64px; } .w-b { width: 67px; }
.w-c { width: 131px; }
.dim { color: #9a9a9a; }
.check { display: flex; width: 14px; height: 14px; margin-right: 3px; background: #5b9bef; border-radius: 2px; flex: none; }
.check.off { width: 13px; margin-right: 4px; background: #f2f2f2; border: 1px solid #ccc; }

.qty { border-collapse: separate; border-spacing: 0; table-layout: fixed; width: 494px; font: 14px/17px "Liberation Mono", "Noto Sans CJK SC", monospace; }
.g { width: 6px; } .q { width: 61px; }
.qty th, .qty td { padding: 0; border-right: 1px solid #000; border-bottom: 1px solid #000; text-align: center; font-weight: 400; white-space: nowrap; overflow: hidden; }
.qty .top { border-top: 1px solid #000; }
.qty .first { border-left: 1px solid #000; }
.qty .b { font-weight: 700; font-size: 15px; }
.qty .big { letter-spacing: .6px; }
.r-a { height: 22px; } .r-b { height: 107px; } .r-c { height: 90px; } .r-d { height: 22px; }
.qty .rn { border: 0; border-bottom: 1px solid #c8c8c8; background: #ececec; color: #666; font: 12px/14px "Liberation Sans", sans-serif; text-align: left; }
.qty .rn.hot { background: #80b9f8; color: #fff; font-weight: 700; }
.qty .num { font-size: 13px; text-align: right; padding-right: 2px; color: #333; }
.qty .num.b { font-size: 14.5px; color: #000; }
.qty .tx { color: #111; }
.qty .picked { box-shadow: inset 0 0 0 2px #2b7fdf; }
.tot td:not(.rn) { background: #e2e2e2; }

.pane-b { display: flex; flex-direction: column; height: 300px; margin-top: 14px; border-top: 1px solid #bcbcbc; }
.pb-title { height: 24px; line-height: 18px; white-space: nowrap; }
.pb-grid { flex: 1; padding: 1px 0 0; border-top: 1px solid #666; border-left: 1px solid #666; border-bottom: 1px solid #d8d8d8; }
.det { border-collapse: separate; border-spacing: 0; table-layout: fixed; width: 247px; }
.d0 { width: 7px; } .d1 { width: 80px; } .d2 { width: 160px; }
.dh { height: 17px; }
.dh th { padding: 0; background: #7fb9f8; color: #fff; font-weight: 700; border-right: 1px solid #6ea8ea; }
.dh .blank { background: #fff; border: 0; }
.dr { height: 36px; }
.dr td { padding: 0 3px; background: #2f7de1; line-height: 18px; color: #111; white-space: nowrap; border-right: 1px solid #fff; }
.dr td:last-child { padding-left: 4px; border-right: 0; }
.dr .dn { padding: 0; background: #7fb9f8; color: #fff; font-weight: 700; font-size: 11px; border-right: 0; }

.foot { display: flex; align-items: flex-start; height: 33px; padding: 8px 6px 0 5px; gap: 11px; border-top: 1px solid #bcbcbc; }
.btn { height: 24px; padding: 0; font: 12px/16px "Noto Sans CJK SC", sans-serif; color: #111; background: #fff; border: 1px solid #c8c8c8; border-radius: 4px; }
.w1 { width: 137px; }
.exit { width: 78px; color: #fff; background: #2f7de1; border-color: #2f7de1; }
```
